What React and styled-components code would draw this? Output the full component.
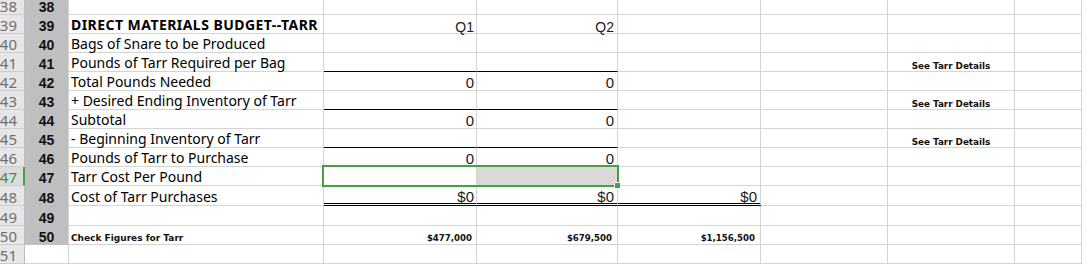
import React from "react";
import styled, { createGlobalStyle, css } from "styled-components";

const Global = createGlobalStyle`
  html, body { margin: 0; padding: 0; background: #fff; overflow: hidden; }
  body { font-family: "Noto Sans", "Liberation Sans", sans-serif; }
`;

const GRID = "25px 44px 255px 153px 141px 143px 127px 127px 1fr";
const LINE = "#d4d4d4";

const Sheet = styled.div`
  margin-top: -4px;
  width: 1082px;
  display: flex;
  flex-direction: column;
`;

const Row = styled.div`
  display: grid;
  grid-template-columns: ${GRID};
  height: ${(p) => p.$h || 19}px;
`;

const Cell = styled.div`
  box-sizing: border-box;
  border-right: 1px solid ${LINE};
  border-bottom: 1px solid ${LINE};
  display: flex;
  align-items: flex-end;
  justify-content: ${(p) =>
    p.$align === "right" ? "flex-end" : p.$align === "center" ? "center" : "flex-start"};
  padding: 0 ${(p) => (p.$pr != null ? p.$pr : 2)}px 0 2px;
  white-space: nowrap;
  overflow: visible;
  color: #000;
  background: ${(p) => p.$fill || "transparent"};
  ${(p) =>
    p.$under === "single" &&
    css`
      border-bottom: 1px solid #000;
    `}
  ${(p) =>
    p.$under === "double" &&
    css`
      border-bottom: 3px double #000;
    `}
`;

const RowHead = styled.div`
  box-sizing: border-box;
  background: ${(p) => (p.$active ? "#dcdcdc" : "#e6e6e6")};
  border-right: ${(p) => (p.$active ? "2px solid #4a9f45" : "1px solid #bdbdbd")};
  border-bottom: 1px solid #cdcdcd;
  color: ${(p) => (p.$active ? "#3f8f3f" : "#707070")};
  font-family: "Noto Sans", sans-serif;
  font-size: 15px;
  line-height: 16px;
  display: flex;
  align-items: flex-end;
  justify-content: flex-end;
  padding-right: ${(p) => (p.$active ? 6 : 7)}px;
  overflow: hidden;
`;

const NumCell = styled.div`
  box-sizing: border-box;
  background: ${(p) => (p.$plain ? "#fff" : "#bfbfbf")};
  border-right: 1px solid ${LINE};
  border-bottom: 1px solid ${(p) => (p.$plain ? LINE : "#bfbfbf")};
  font-family: "Liberation Sans", Arial, sans-serif;
  font-weight: bold;
  font-size: 14px;
  line-height: 14px;
  color: #111;
  display: flex;
  align-items: flex-end;
  justify-content: center;
`;

const Label = styled.span`
  font-family: "Noto Sans", sans-serif;
  font-size: 14px;
  line-height: 16px;
  font-weight: ${(p) => (p.$bold ? 700 : 400)};
  letter-spacing: ${(p) => (p.$bold ? "0.45px" : "0")};
`;

const Value = styled.span`
  font-family: ${(p) =>
    p.$narrow ? `"Liberation Sans Narrow", "Liberation Sans", Arial, sans-serif` : `"Liberation Sans", Arial, sans-serif`};
  font-size: ${(p) => p.$size || 14}px;
  line-height: ${(p) => p.$lh || 14}px;
  color: #1a1a1a;
`;

const Small = styled.span`
  font-family: "DejaVu Sans", Verdana, sans-serif;
  font-weight: bold;
  font-size: ${(p) => p.$size || 8.8}px;
  line-height: 10px;
  padding-bottom: ${(p) => p.$pb || 0}px;
  color: #111;
`;

const Range = styled.div`
  grid-column: span 2;
  display: grid;
  grid-template-columns: 153px 141px;
  position: relative;
`;

const RangeFrame = styled.div`
  position: absolute;
  left: -2px;
  top: -2px;
  right: -1px;
  bottom: -1px;
  border: 2px solid #4a9f45;
  pointer-events: none;
`;

const FillHandle = styled.div`
  position: absolute;
  right: -3px;
  bottom: -3px;
  width: 5px;
  height: 5px;
  background: #4a9f45;
  border: 1px solid #fff;
  border-right: none;
  border-bottom: none;
`;

const rows = [
  { n: 38 },
  { n: 39, label: "DIRECT MATERIALS BUDGET--TARR", bold: true, d: "Q1", e: "Q2", head: true },
  { n: 40, label: "Bags of Snare to be Produced" },
  { n: 41, label: "Pounds of Tarr Required per Bag", under: "single", note: true },
  { n: 42, label: "Total Pounds Needed", d: "0", e: "0" },
  { n: 43, label: "+ Desired Ending Inventory of Tarr", under: "single", note: true },
  { n: 44, label: "Subtotal", d: "0", e: "0" },
  { n: 45, label: "-  Beginning Inventory of Tarr", under: "single", note: true },
  { n: 46, label: "Pounds of Tarr to Purchase", d: "0", e: "0" },
  { n: 47, label: "Tarr Cost Per Pound", selected: true },
  { n: 48, label: "Cost of Tarr Purchases", d: "$0", e: "$0", f: "$0", under: "double", money: true, h: 20 },
  { n: 49, h: 20 },
  { n: 50, small: "Check Figures for Tarr", d: "$477,000", e: "$679,500", f: "$1,156,500", check: true },
  { n: 51, plain: true },
];

function renderVal(r, v) {
  if (!v) return null;
  if (r.check) return <Small $size={8.6} $pb={1}>{v}</Small>;
  if (r.head) return <Value $size={14} $lh={12}>{v}</Value>;
  if (r.money) return <Value $narrow $size={15} $lh={13}>{v}</Value>;
  return <Value $narrow $size={15} $lh={14}>{v}</Value>;
}

function SheetRow({ r }) {
  const sel = r.selected;
  const pr = r.check ? 4 : 2;
  return (
    <Row $h={r.h}>
      <RowHead $active={sel}>{r.n}</RowHead>
      <NumCell $plain={r.plain}>{r.plain ? "" : r.n}</NumCell>
      <Cell>
        {r.label && <Label $bold={r.bold}>{r.label}</Label>}
        {r.small && <Small $size={9} $pb={1}>{r.small}</Small>}
      </Cell>
      {sel ? (
        <Range>
          <Cell />
          <Cell $fill="#d9d9d9" />
          <RangeFrame>
            <FillHandle />
          </RangeFrame>
        </Range>
      ) : (
        <>
          <Cell $align="right" $pr={pr} $under={r.under}>{renderVal(r, r.d)}</Cell>
          <Cell $align="right" $pr={pr + 1} $under={r.under}>{renderVal(r, r.e)}</Cell>
        </>
      )}
      <Cell $align="right" $pr={pr + 1} $under={r.under === "double" ? "double" : undefined}>
        {renderVal(r, r.f)}
      </Cell>
      <Cell />
      <Cell $align="center">{r.note && <Small>See Tarr Details</Small>}</Cell>
      <Cell />
    </Row>
  );
}

export default function App() {
  return (
    <>
      <Global />
      <Sheet>
        {rows.map((r) => (
          <SheetRow key={r.n} r={r} />
        ))}
      </Sheet>
    </>
  );
}
